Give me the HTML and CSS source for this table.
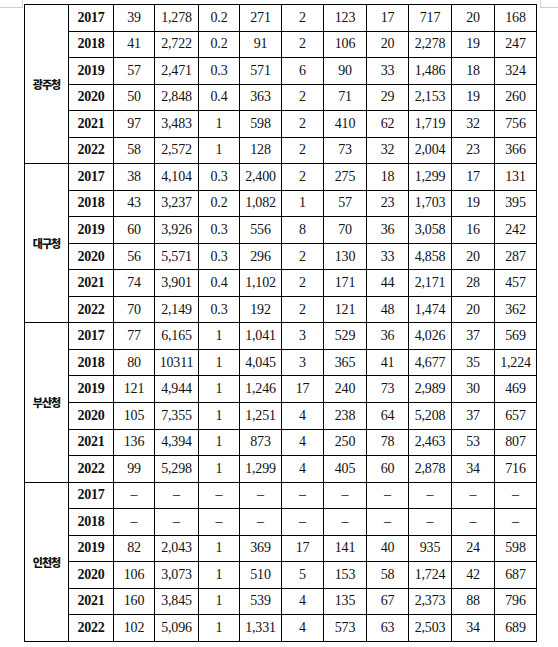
FILE: index.html
```html
<!DOCTYPE html>
<html lang="ko">
<head>
<meta charset="utf-8">
<link rel="stylesheet" href="styles.css">
</head>
<body>
<div class="mark mark-left"></div>
<div class="mark mark-right"></div>
<table class="stats">
<colgroup>
<col class="c44"><col class="c45"><col class="c41"><col class="c44"><col class="c41"><col class="c42"><col class="c42"><col class="c43"><col class="c42"><col class="c43"><col class="c43"><col class="c42">
</colgroup>
<tbody>
<tr><th class="region" rowspan="6">광주청</th><th class="year">2017</th><td>39</td><td>1,278</td><td>0.2</td><td>271</td><td>2</td><td>123</td><td>17</td><td>717</td><td>20</td><td>168</td></tr>
<tr><th class="year">2018</th><td>41</td><td>2,722</td><td>0.2</td><td>91</td><td>2</td><td>106</td><td>20</td><td>2,278</td><td>19</td><td>247</td></tr>
<tr><th class="year">2019</th><td>57</td><td>2,471</td><td>0.3</td><td>571</td><td>6</td><td>90</td><td>33</td><td>1,486</td><td>18</td><td>324</td></tr>
<tr><th class="year">2020</th><td>50</td><td>2,848</td><td>0.4</td><td>363</td><td>2</td><td>71</td><td>29</td><td>2,153</td><td>19</td><td>260</td></tr>
<tr><th class="year">2021</th><td>97</td><td>3,483</td><td>1</td><td>598</td><td>2</td><td>410</td><td>62</td><td>1,719</td><td>32</td><td>756</td></tr>
<tr><th class="year">2022</th><td>58</td><td>2,572</td><td>1</td><td>128</td><td>2</td><td>73</td><td>32</td><td>2,004</td><td>23</td><td>366</td></tr>

<tr><th class="region" rowspan="6">대구청</th><th class="year">2017</th><td>38</td><td>4,104</td><td>0.3</td><td>2,400</td><td>2</td><td>275</td><td>18</td><td>1,299</td><td>17</td><td>131</td></tr>
<tr><th class="year">2018</th><td>43</td><td>3,237</td><td>0.2</td><td>1,082</td><td>1</td><td>57</td><td>23</td><td>1,703</td><td>19</td><td>395</td></tr>
<tr><th class="year">2019</th><td>60</td><td>3,926</td><td>0.3</td><td>556</td><td>8</td><td>70</td><td>36</td><td>3,058</td><td>16</td><td>242</td></tr>
<tr><th class="year">2020</th><td>56</td><td>5,571</td><td>0.3</td><td>296</td><td>2</td><td>130</td><td>33</td><td>4,858</td><td>20</td><td>287</td></tr>
<tr><th class="year">2021</th><td>74</td><td>3,901</td><td>0.4</td><td>1,102</td><td>2</td><td>171</td><td>44</td><td>2,171</td><td>28</td><td>457</td></tr>
<tr><th class="year">2022</th><td>70</td><td>2,149</td><td>0.3</td><td>192</td><td>2</td><td>121</td><td>48</td><td>1,474</td><td>20</td><td>362</td></tr>

<tr><th class="region" rowspan="6">부산청</th><th class="year">2017</th><td>77</td><td>6,165</td><td>1</td><td>1,041</td><td>3</td><td>529</td><td>36</td><td>4,026</td><td>37</td><td>569</td></tr>
<tr><th class="year">2018</th><td>80</td><td>10311</td><td>1</td><td>4,045</td><td>3</td><td>365</td><td>41</td><td>4,677</td><td>35</td><td>1,224</td></tr>
<tr><th class="year">2019</th><td>121</td><td>4,944</td><td>1</td><td>1,246</td><td>17</td><td>240</td><td>73</td><td>2,989</td><td>30</td><td>469</td></tr>
<tr><th class="year">2020</th><td>105</td><td>7,355</td><td>1</td><td>1,251</td><td>4</td><td>238</td><td>64</td><td>5,208</td><td>37</td><td>657</td></tr>
<tr><th class="year">2021</th><td>136</td><td>4,394</td><td>1</td><td>873</td><td>4</td><td>250</td><td>78</td><td>2,463</td><td>53</td><td>807</td></tr>
<tr><th class="year">2022</th><td>99</td><td>5,298</td><td>1</td><td>1,299</td><td>4</td><td>405</td><td>60</td><td>2,878</td><td>34</td><td>716</td></tr>

<tr><th class="region" rowspan="6">인천청</th><th class="year">2017</th><td>–</td><td>–</td><td>–</td><td>–</td><td>–</td><td>–</td><td>–</td><td>–</td><td>–</td><td>–</td></tr>
<tr><th class="year">2018</th><td>–</td><td>–</td><td>–</td><td>–</td><td>–</td><td>–</td><td>–</td><td>–</td><td>–</td><td>–</td></tr>
<tr><th class="year">2019</th><td>82</td><td>2,043</td><td>1</td><td>369</td><td>17</td><td>141</td><td>40</td><td>935</td><td>24</td><td>598</td></tr>
<tr><th class="year">2020</th><td>106</td><td>3,073</td><td>1</td><td>510</td><td>5</td><td>153</td><td>58</td><td>1,724</td><td>42</td><td>687</td></tr>
<tr><th class="year">2021</th><td>160</td><td>3,845</td><td>1</td><td>539</td><td>4</td><td>135</td><td>67</td><td>2,373</td><td>88</td><td>796</td></tr>
<tr><th class="year">2022</th><td>102</td><td>5,096</td><td>1</td><td>1,331</td><td>4</td><td>573</td><td>63</td><td>2,503</td><td>34</td><td>689</td></tr>
</tbody>
</table>
</body>
</html>
```

FILE: styles.css
```css
html, body {
  margin: 0;
  padding: 0;
  background: #ffffff;
}

body {
  position: relative;
  width: 558px;
  height: 647px;
  overflow: hidden;
  padding-top: 4px;
  box-sizing: border-box;
}

.mark {
  position: absolute;
  top: 0;
  width: 22px;
  height: 7px;
  border-color: #cfcfcf;
  border-style: solid;
  border-width: 0;
}

.mark-left {
  left: 0;
  border-right-width: 1px;
  border-bottom-width: 1px;
}

.mark-right {
  left: 540px;
  width: 18px;
  border-left-width: 1px;
  border-bottom-width: 1px;
}

.stats {
  margin-left: 24px;
  border-collapse: collapse;
  table-layout: fixed;
  width: 513px;
  font-family: "Liberation Serif", "Times New Roman", serif;
  font-size: 14px;
  color: #111111;
}

.stats tr {
  height: 26.54px;
}

.stats td,
.stats th {
  border: 1px solid #000000;
  padding: 0;
  text-align: center;
  vertical-align: middle;
  white-space: nowrap;
  overflow: hidden;
}

.stats td {
  font-weight: normal;
  letter-spacing: -0.2px;
}

.year {
  font-weight: bold;
  font-size: 14px;
  letter-spacing: -0.2px;
}

.region {
  font-family: "Noto Sans CJK KR", "Noto Sans", sans-serif;
  font-weight: 900;
  font-size: 11px;
  letter-spacing: -1px;
}

.c41 { width: 41px; }
.c42 { width: 42px; }
.c43 { width: 43px; }
.c44 { width: 44px; }
.c45 { width: 45px; }
```
